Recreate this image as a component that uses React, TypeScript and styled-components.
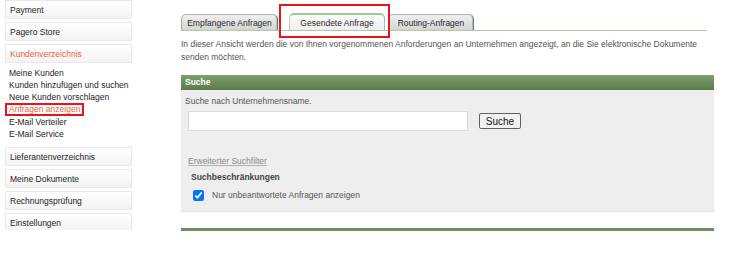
import React from "react";
import { createGlobalStyle, styled } from "styled-components";

const GlobalStyle = createGlobalStyle`
  html, body {
    margin: 0;
    padding: 0;
    background: #ffffff;
    font-family: "Liberation Sans", Arial, sans-serif;
    font-size: 8.5px;
    color: #333;
  }
`;

const Page = styled.div`
  display: flex;
  align-items: flex-start;
  width: 740px;
  height: 275px;
`;

const Sidebar = styled.nav`
  width: 127px;
  height: 230px;
  margin-left: 5px;
  overflow: hidden;
  display: flex;
  flex-direction: column;
`;

const MenuBox = styled.div<{ $active?: boolean }>`
  box-sizing: border-box;
  height: 19px;
  flex-shrink: 0;
  margin-bottom: 3px;
  padding-left: 4px;
  display: flex;
  align-items: center;
  border: 1px solid #e9e9e9;
  background: linear-gradient(#ffffff, #f3f3f3);
  color: ${(p) => (p.$active ? "#e8643c" : "#1e1e1e")};
`;

const SubMenu = styled.ul`
  list-style: none;
  margin: 0.5px 0 7px;
  padding: 0 0 0 4px;
`;

const SubItem = styled.li<{ $current?: boolean }>`
  line-height: 12.3px;
  color: ${(p) => (p.$current ? "#e8643c" : "#1e1e1e")};
`;

const Highlight = styled.span<{ $inset: string }>`
  position: relative;
  &::after {
    content: "";
    position: absolute;
    inset: ${(p) => p.$inset};
    border: 2px solid #e8141b;
    pointer-events: none;
  }
`;

const Main = styled.main`
  width: 533px;
  margin-left: 49px;
  padding-top: 13px;
`;

const TabRow = styled.div`
  width: 526px;
  height: 17px;
  display: flex;
  align-items: flex-end;
  border-bottom: 1px solid #b3c7ab;
`;

const Tab = styled.div<{ $active?: boolean; $width: number; $gap: number }>`
  box-sizing: border-box;
  width: ${(p) => p.$width}px;
  height: ${(p) => (p.$active ? 17 : 16)}px;
  margin-right: ${(p) => p.$gap}px;
  display: flex;
  align-items: center;
  justify-content: center;
  border-radius: 5px 5px 0 0;
  border: 1px solid ${(p) => (p.$active ? "#c4c4c4" : "#a9a9a9")};
  border-right-color: ${(p) => (p.$active ? "#b0b0b0" : "#7a7a7a")};
  border-top: ${(p) => (p.$active ? "2px solid #9cc89a" : "1px solid #b4b4b4")};
  border-bottom: none;
  background: ${(p) =>
    p.$active
      ? "linear-gradient(#fbfbfb, #eeeeee)"
      : "linear-gradient(#f0f0f0, #d4d4d4)"};
  box-shadow: ${(p) => (p.$active ? "none" : "inset -1px 0 0 #b8b8b8")};
  color: #2a2a2a;
  white-space: nowrap;
`;

const Intro = styled.p`
  margin: 6.5px 0 0;
  width: 526px;
  line-height: 13px;
  color: #555;
`;

const SectionHeader = styled.div`
  margin-top: 11.5px;
  height: 15px;
  line-height: 15px;
  padding-left: 4px;
  background: linear-gradient(#7f9f6c, #5b7c4a);
  color: #ffffff;
  font-weight: bold;
`;

const Panel = styled.div`
  box-sizing: border-box;
  height: 121px;
  padding: 5px 4px 10px;
  background: #eeeeee;
  box-shadow: 0 1px 1px #e4e4e4;
  color: #555;
`;

const Line = styled.div`
  line-height: 12px;
`;

const SearchRow = styled.div`
  display: flex;
  align-items: center;
  margin: 4px 0 0 3px;
`;

const SearchInput = styled.input`
  box-sizing: border-box;
  width: 280px;
  height: 20px;
  margin: 0;
  border: 1px solid #dcdcdc;
  background: #ffffff;
  outline: none;
`;

const SearchButton = styled.button`
  box-sizing: border-box;
  width: 42px;
  height: 16px;
  margin-left: 11px;
  padding: 0;
  border: 1px solid #606060;
  border-radius: 2px;
  background: #f2f2f2;
  font-family: "Liberation Sans", Arial, sans-serif;
  font-size: 10px;
  color: #111;
`;

const FilterLink = styled.a`
  display: block;
  margin: 24px 0 0 3px;
  line-height: 12px;
  color: #8a8a8a;
  text-decoration: underline;
  text-decoration-color: #b0b0b0;
`;

const Subheading = styled.div`
  margin: 4px 0 0 6px;
  line-height: 12px;
  color: #444;
  font-weight: bold;
`;

const CheckRow = styled.label`
  display: flex;
  align-items: center;
  gap: 8px;
  margin: 6px 0 0 8px;
  line-height: 12px;
`;

const CheckBox = styled.input`
  width: 11px;
  height: 11px;
  margin: 0;
  accent-color: #0075ff;
`;

const FooterBar = styled.div`
  margin-top: 17px;
  height: 3px;
  background: #6f905e;
`;

const topMenu = ["Payment", "Pagero Store"];
const subMenu = [
  "Meine Kunden",
  "Kunden hinzufügen und suchen",
  "Neue Kunden vorschlagen",
  "Anfragen anzeigen",
  "E-Mail Verteiler",
  "E-Mail Service",
];
const bottomMenu = [
  "Lieferantenverzeichnis",
  "Meine Dokumente",
  "Rechnungsprüfung",
  "Einstellungen",
];

export default function App() {
  return (
    <>
      <GlobalStyle />
      <Page>
        <Sidebar>
          {topMenu.map((item) => (
            <MenuBox key={item}>{item}</MenuBox>
          ))}
          <MenuBox $active>Kundenverzeichnis</MenuBox>
          <SubMenu>
            {subMenu.map((item) => (
              <SubItem key={item} $current={item === "Anfragen anzeigen"}>
                {item === "Anfragen anzeigen" ? (
                  <Highlight $inset="-1px -4px -2px -4px">{item}</Highlight>
                ) : (
                  item
                )}
              </SubItem>
            ))}
          </SubMenu>
          {bottomMenu.map((item) => (
            <MenuBox key={item}>{item}</MenuBox>
          ))}
        </Sidebar>

        <Main>
          <TabRow>
            <Tab $width={97} $gap={11}>Empfangene Anfragen</Tab>
            <Highlight $inset="-9px -2px -8px -10px">
              <Tab $active $width={96} $gap={3}>Gesendete Anfrage</Tab>
            </Highlight>
            <Tab $width={86} $gap={0}>Routing-Anfragen</Tab>
          </TabRow>

          <Intro>
            In dieser Ansicht werden die von Ihnen vorgenommenen Anforderungen an
            Unternehmen angezeigt, an die Sie elektronische Dokumente senden
            möchten.
          </Intro>

          <SectionHeader>Suche</SectionHeader>
          <Panel>
            <Line>Suche nach Unternehmensname.</Line>
            <SearchRow>
              <SearchInput type="text" />
              <SearchButton type="button">Suche</SearchButton>
            </SearchRow>
            <FilterLink>Erweiterter Suchfilter</FilterLink>
            <Subheading>Suchbeschränkungen</Subheading>
            <CheckRow>
              <CheckBox type="checkbox" defaultChecked />
              Nur unbeantwortete Anfragen anzeigen
            </CheckRow>
          </Panel>
          <FooterBar />
        </Main>
      </Page>
    </>
  );
}
